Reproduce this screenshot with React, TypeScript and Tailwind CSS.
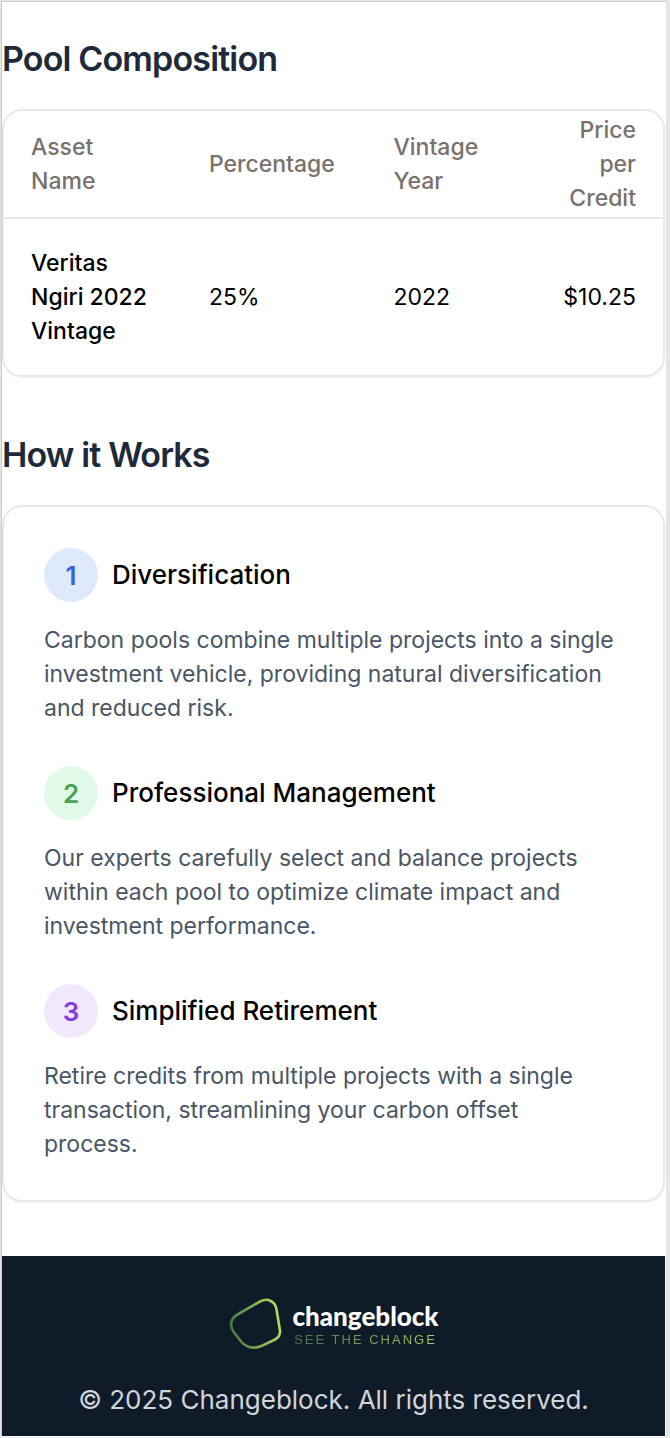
import React from "react";

const assets = [
  { name: "Veritas Ngiri 2022 Vintage", percentage: "25%", year: "2022", price: "$10.25" },
];

const steps = [
  {
    title: "Diversification",
    badge: "bg-[#dee9fc] text-[#3662e3]",
    text: "Carbon pools combine multiple projects into a single investment vehicle, providing natural diversification and reduced risk.",
  },
  {
    title: "Professional Management",
    badge: "bg-[#e1f9e8] text-[#4ba157]",
    text: "Our experts carefully select and balance projects within each pool to optimize climate impact and investment performance.",
  },
  {
    title: "Simplified Retirement",
    badge: "bg-[#f1e8fe] text-[#8639e2]",
    text: "Retire credits from multiple projects with a single transaction, streamlining your carbon offset process.",
  },
];

const Logo = () => (
  <div className="flex items-center gap-2.5">
    <svg width="54" height="52" viewBox="0 0 54 52" fill="none" aria-hidden="true">
      <defs>
        <linearGradient id="mark" x1="0" y1="30" x2="54" y2="22" gradientUnits="userSpaceOnUse">
          <stop stopColor="#42734a" />
          <stop offset="1" stopColor="#b8e05c" />
        </linearGradient>
      </defs>
      <path
        d="M9.5 16.5 L32 3.5 C39 -0.5 47 3 48.3 10.5 L51.8 31.5 C52.5 35.5 50.5 39.5 47 41.5 L34 47.7 C26 51 18.5 49.5 13.5 44 L6 34.5 C1 28 2.5 20.5 9.5 16.5Z"
        stroke="url(#mark)"
        strokeWidth="2.6"
      />
    </svg>
    <div className="flex flex-col pt-2">
      <span className="font-['Lato'] text-[26px] leading-6 font-black text-white">changeblock</span>
      <span className="bg-gradient-to-r from-[#42734a] to-[#a5cc60] bg-clip-text font-['Liberation_Sans'] text-[13px] leading-6 tracking-[2px] text-transparent">
        SEE THE CHANGE
      </span>
    </div>
  </div>
);

const App = () => {
  return (
    <div className="bg-[#e5e5e5] pt-px pr-1 pb-px pl-px font-['Inter',sans-serif]">
      <div className="border-t border-l border-[#cccccc] bg-white pr-px pb-px">
        <main className="pt-[33px] pb-[54px]">
          {/* Pool Composition */}
          <section>
            <h2 className="mb-[26px] text-[34px] leading-12 font-semibold tracking-tight text-gray-800">Pool Composition</h2>
            <div className="rounded-[20px] border-2 border-[#e9e9e9] shadow-xs">
              <table className="w-full table-fixed text-[23px] leading-[34px]">
                <colgroup>
                  <col className="w-[27%]" />
                  <col className="w-[28%]" />
                  <col className="w-[22%]" />
                  <col className="w-[23%]" />
                </colgroup>
                <thead>
                  <tr className="border-b-2 border-[#e9e9e9] text-left text-[#78716c]">
                    <th scope="col" className="px-[27px] py-0.5 font-medium">Asset Name</th>
                    <th scope="col" className="px-[27px] py-0.5 font-medium">Percentage</th>
                    <th scope="col" className="px-[27px] py-0.5 font-medium">Vintage Year</th>
                    <th scope="col" className="px-[27px] py-0.5 text-right font-medium">Price per Credit</th>
                  </tr>
                </thead>
                <tbody>
                  {assets.map((asset) => (
                    <tr key={asset.name} className="text-black">
                      <td className="p-[27px] font-medium">{asset.name}</td>
                      <td className="p-[27px]">{asset.percentage}</td>
                      <td className="p-[27px]">{asset.year}</td>
                      <td className="p-[27px] text-right">{asset.price}</td>
                    </tr>
                  ))}
                </tbody>
              </table>
            </div>
          </section>

          {/* How it Works */}
          <section className="mt-[54px]">
            <h2 className="mb-[26px] text-[34px] leading-12 font-semibold tracking-tight text-gray-800">How it Works</h2>
            <div className="space-y-[41px] rounded-[20px] border-2 border-[#e9e9e9] pt-[41px] pr-12 pb-[39px] pl-10 shadow-xs">
              {steps.map((step, i) => (
                <div key={step.title}>
                  <div className="mb-[21px] flex items-center gap-3.5">
                    <div className={`flex size-[54px] items-center justify-center rounded-full text-[26px] font-semibold ${step.badge}`}>
                      {i + 1}
                    </div>
                    <h3 className="text-[26px] leading-10 font-medium text-black">{step.title}</h3>
                  </div>
                  <p className="text-[23px] leading-[34px] text-gray-600">{step.text}</p>
                </div>
              ))}
            </div>
          </section>
        </main>

        {/* Footer */}
        <footer className="flex flex-col items-center gap-7 bg-[#0f1b28] px-6 pt-10 pb-4 text-center">
          <Logo />
          <p className="text-[26px] leading-10 text-gray-300">© 2025 Changeblock. All rights reserved.</p>
        </footer>
      </div>
    </div>
  );
};

export default App;
